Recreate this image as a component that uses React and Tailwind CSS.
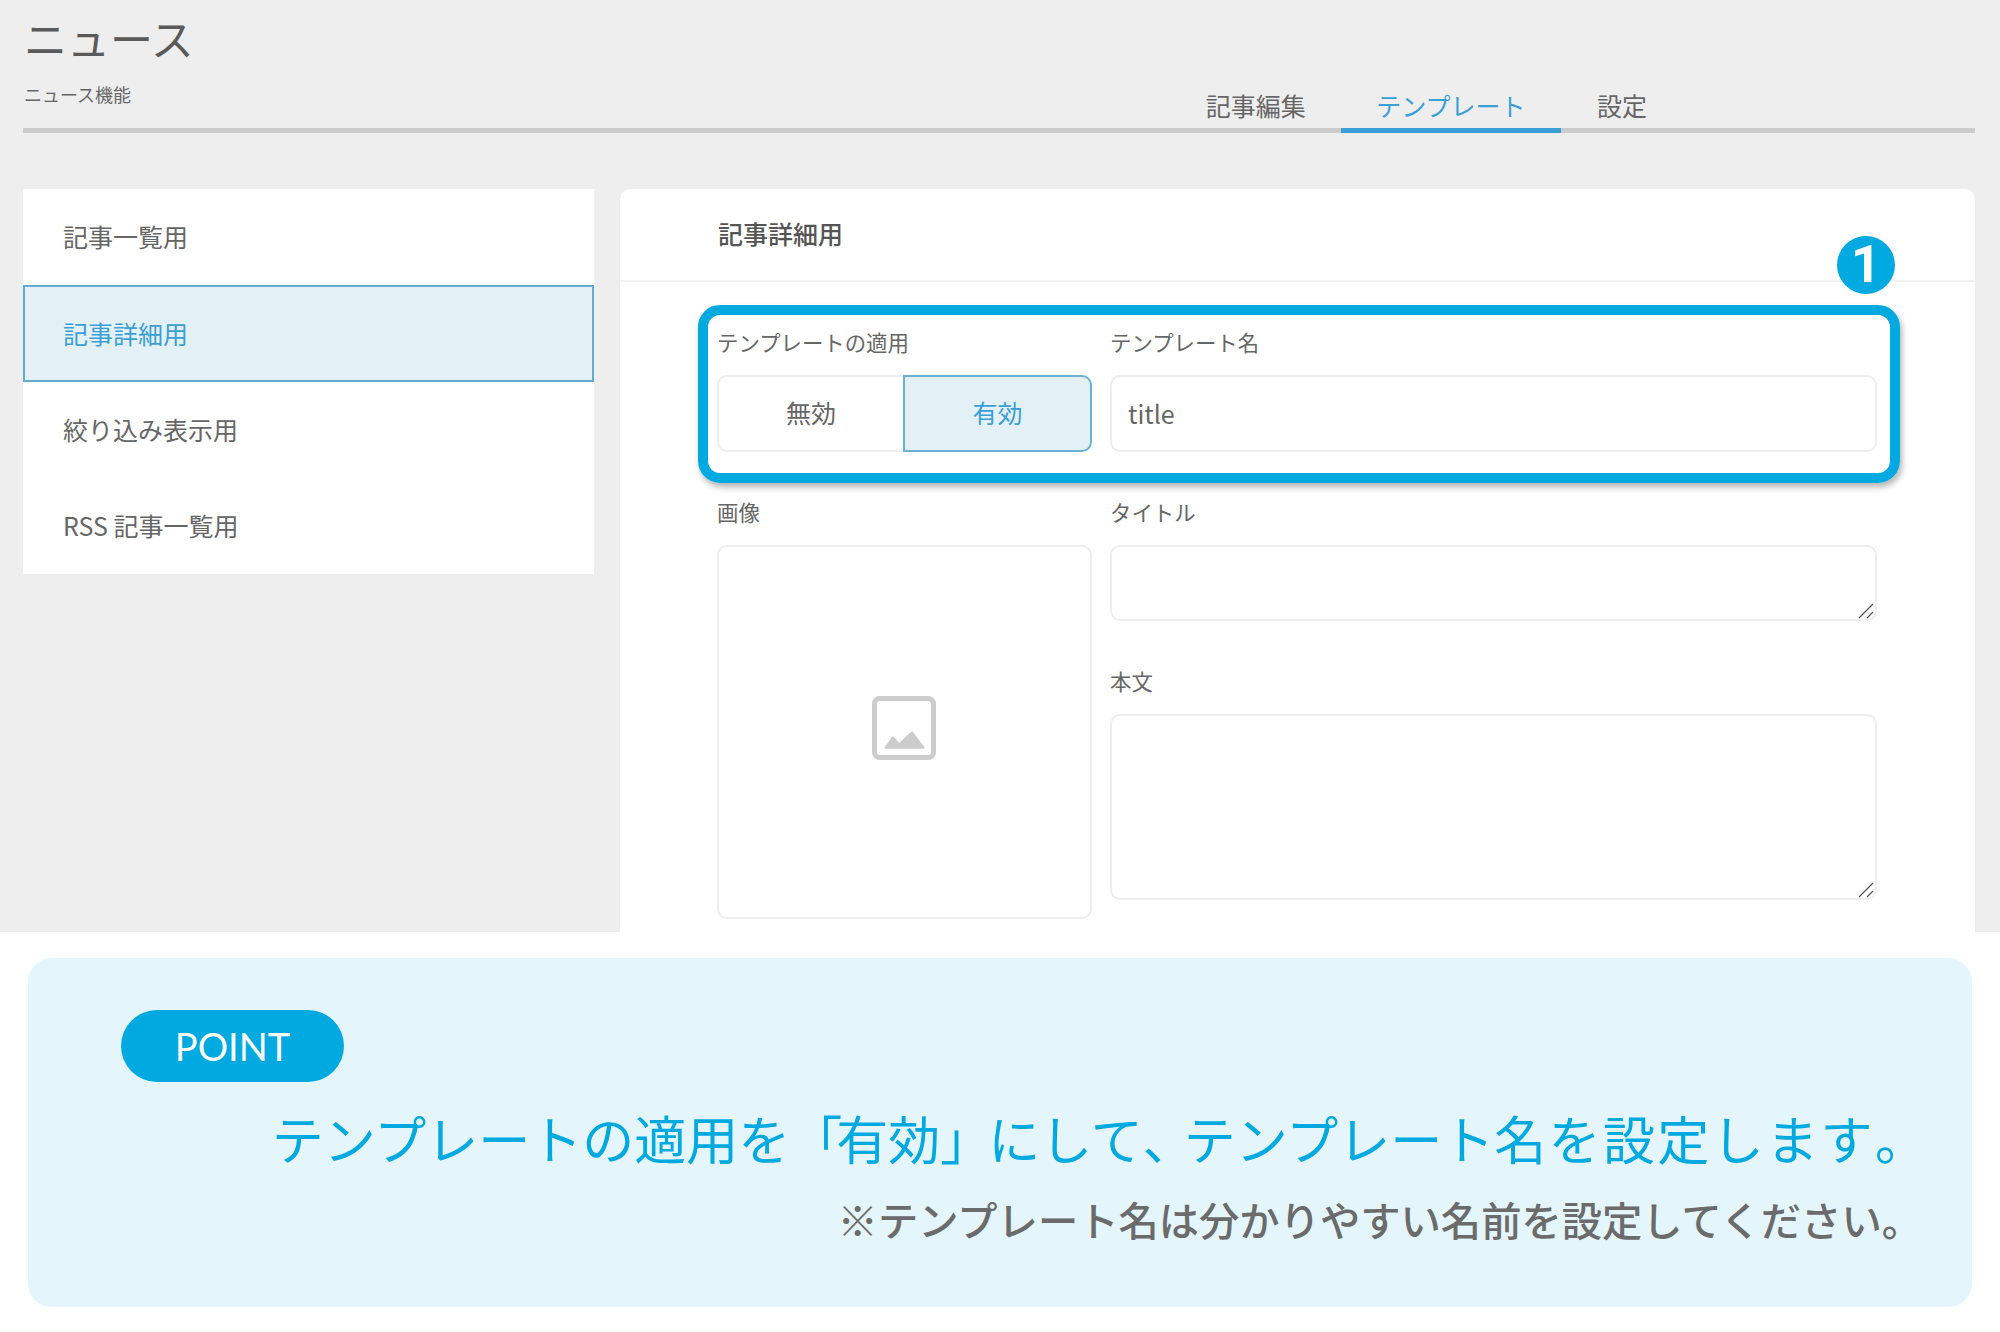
const font = { fontFamily: '"Noto Sans CJK JP", "Noto Sans", sans-serif' };

const menuItems = ["記事一覧用", "記事詳細用", "絞り込み表示用", "RSS 記事一覧用"];

function ImageIcon() {
  return (
    <svg width="64" height="64" viewBox="0 0 64 64" fill="none">
      <rect x="2.5" y="2.5" width="59" height="59" rx="5" stroke="#cccccc" strokeWidth="5" />
      <path d="M13 52 L21 41 L27 48 L40 36 L52 52 Z" fill="#cccccc" stroke="#cccccc" strokeWidth="1.5" strokeLinejoin="round" />
    </svg>
  );
}

function Field({ label, className, children }) {
  return (
    <div className={className}>
      <p className="text-[21.4px] leading-[30px] text-[#666666] mb-[18px]">{label}</p>
      {children}
    </div>
  );
}

function TextBox({ className }) {
  return (
    <div className="relative">
      <textarea className={`block w-full resize-none border-2 border-[#eeeeee] rounded-[10px] outline-none ${className}`} />
      <svg className="absolute right-[3px] bottom-[2px]" width="16" height="16" viewBox="0 0 16 16" fill="none" stroke="#555555" strokeWidth="1.2">
        <path d="M1 15 L15 1" />
        <path d="M9 15 L15 9" />
      </svg>
    </div>
  );
}

export default function App() {
  return (
    <div className="w-[2000px] h-[1332px] bg-white overflow-hidden" style={font}>
      <div className="h-[932px] bg-[#eeeeee] overflow-hidden">
        <div className="ml-[23px] mr-[25px] h-[133px] border-b-[5px] border-[#cccccc] flex justify-between items-end">
          <div className="self-start pl-[1px]">
            <h1 className="text-[43px] leading-[60px] mt-[7px] text-[#5a5a5a]">ニュース</h1>
            <p className="text-[18px] leading-[24px] mt-[15px] text-[#666666]">ニュース機能</p>
          </div>
          <div className="flex mr-[293px] -mb-[5px] text-[25px] text-[#666666]">
            <div className="pl-[36px] pr-[35px] h-[56px] pt-[10px]">記事編集</div>
            <div className="px-[35.5px] h-[56px] pt-[10px] border-b-[5px] border-[#3a9fd6] text-[#3a9fd6]">テンプレート</div>
            <div className="pl-[36px] pr-[35px] h-[56px] pt-[10px]">設定</div>
          </div>
        </div>

        <div className="flex items-start gap-[26px] ml-[23px] mr-[25px] mt-[56px]">
          <div className="w-[571px] bg-white">
            {menuItems.map((item, i) => (
              <div
                key={item}
                className={
                  i === 1
                    ? "h-[96.3px] pl-[38px] flex items-center text-[25px] text-[#3a9fd6] bg-[#e3f1f6] border-2 border-[#63abd0]"
                    : "h-[96.3px] pl-[40px] flex items-center text-[25px] text-[#666666]"
                }
              >
                {item}
              </div>
            ))}
          </div>

          <div className="relative flex-1 h-[760px] bg-white rounded-t-[10px]">
            <div className="h-[93px] pl-[98px] pb-[2px] flex items-center border-b-2 border-[#f3f3f3] text-[25px] font-medium text-[#555555]">
              記事詳細用
            </div>

            <div className="pl-[97px] pr-[98px] pt-[45px] grid grid-cols-[375px_1fr] gap-x-[18px]">
              <Field label="テンプレートの適用">
                <div className="flex h-[77px] text-[25px]">
                  <div className="w-[186px] pb-[2px] flex items-center justify-center border-2 border-r-0 border-[#eeeeee] rounded-l-[10px] text-[#666666]">無効</div>
                  <div className="flex-1 pb-[2px] flex items-center justify-center bg-[#e3f1f6] border-2 border-[#6ab0d4] rounded-r-[10px] text-[#3a9fd6]">有効</div>
                </div>
              </Field>
              <Field label="テンプレート名">
                <input
                  defaultValue="title"
                  className="w-full h-[77px] px-[16px] pb-[2px] border-2 border-[#eeeeee] rounded-[10px] text-[25px] text-[#666666] outline-none"
                  style={font}
                />
              </Field>

              <Field label="画像" className="mt-[45px]">
                <div className="h-[374px] pb-[9px] pr-[2px] border-2 border-[#eeeeee] rounded-[10px] flex items-center justify-center">
                  <ImageIcon />
                </div>
              </Field>
              <div className="mt-[45px]">
                <Field label="タイトル">
                  <TextBox className="h-[76px]" />
                </Field>
                <Field label="本文" className="mt-[45px]">
                  <TextBox className="h-[186px]" />
                </Field>
              </div>
            </div>

            {/* 注釈の枠とバッジ */}
            <div className="absolute left-[78px] top-[116px] w-[1202px] h-[178px] border-[10px] border-[#00a9e0] rounded-[22px] shadow-[2px_4px_6px_rgba(0,0,0,0.3)]" />
            <div
              className="absolute left-[1217px] top-[47px] w-[58px] h-[58px] rounded-full bg-[#00a9e0] flex items-center justify-center text-white text-[52px] font-bold leading-none"
              style={{ fontFamily: 'Roboto, sans-serif' }}
            >
              1
            </div>
          </div>
        </div>
      </div>

      <div className="mt-[26px] ml-[28px] w-[1944px] h-[349px] bg-[#e4f5fc] rounded-[24px] pt-[52px] pl-[93px] pr-[71px]">
        <div
          className="w-[223px] h-[72px] rounded-full bg-[#00a9e0] flex items-center justify-center text-white text-[38px] leading-none"
          style={{ fontFamily: 'Lato, sans-serif' }}
        >
          POINT
        </div>
        <p className="text-right text-[52px] leading-[70px] mt-[21px] -mr-[26px] whitespace-nowrap text-[#00a9e0]">
          <span>テンプレートの適用を</span>
          <span className="tracking-[-6px]">「</span>
          <span>有効</span>
          <span className="tracking-[-4px]">」</span>
          <span>にして</span>
          <span className="tracking-[-11px]">、</span>
          <span>テンプレート</span>
          <span className="tracking-[2.4px]">名を設定します</span>
          <span>。</span>
        </p>
        <p className="text-right text-[40.3px] leading-[56px] mt-[18px] -mr-[21px] whitespace-nowrap font-medium text-[#6b6b6b]">
          ※テンプレート名は分かりやすい名前を設定してください。
        </p>
      </div>
    </div>
  );
}
